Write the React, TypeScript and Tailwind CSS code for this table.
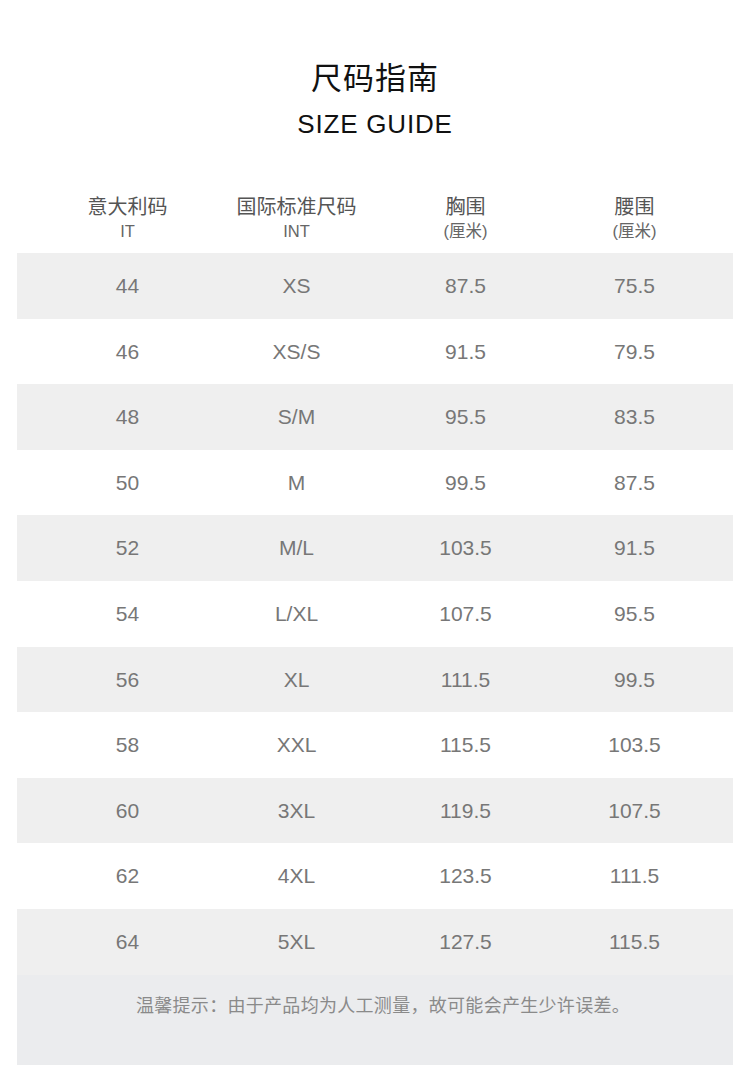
import React from "react";

const rows: [string, string, string, string][] = [
  ["44", "XS", "87.5", "75.5"],
  ["46", "XS/S", "91.5", "79.5"],
  ["48", "S/M", "95.5", "83.5"],
  ["50", "M", "99.5", "87.5"],
  ["52", "M/L", "103.5", "91.5"],
  ["54", "L/XL", "107.5", "95.5"],
  ["56", "XL", "111.5", "99.5"],
  ["58", "XXL", "115.5", "103.5"],
  ["60", "3XL", "119.5", "107.5"],
  ["62", "4XL", "123.5", "111.5"],
  ["64", "5XL", "127.5", "115.5"],
];

const headers: [string, string][] = [
  ["意大利码", "IT"],
  ["国际标准尺码", "INT"],
  ["胸围", "(厘米)"],
  ["腰围", "(厘米)"],
];

const font = {
  fontFamily: '"Liberation Sans", "Noto Sans CJK SC", sans-serif',
};

export default function App() {
  return (
    <div className="w-[750px] h-[1090px] bg-white" style={font}>
      <div className="flex flex-col items-center pt-[58px]">
        <div className="text-[31px] leading-[42px] text-[#111] tracking-[1px]">尺码指南</div>
        <div className="mt-[7px] text-[26px] leading-[34px] text-[#111] tracking-[0.8px]">SIZE GUIDE</div>
      </div>
      <div className="mx-[17px] mt-[50px]">
        <div className="grid grid-cols-[169px_169px_169px_169px] pl-[26px] h-[62px] items-start pt-[4px]">
          {headers.map(([a, b], i) => (
            <div key={i} className="flex flex-col items-center">
              <div className="text-[20px] leading-[24px] text-[#555]">{a}</div>
              <div className="text-[16.5px] leading-[24px] text-[#666]">{b}</div>
            </div>
          ))}
        </div>
        {rows.map((r, i) => (
          <div
            key={i}
            className={`grid grid-cols-[169px_169px_169px_169px] pl-[26px] h-[65.6px] items-center ${
              i % 2 === 0 ? "bg-[#efefef]" : "bg-white"
            }`}
          >
            {r.map((c, j) => (
              <div key={j} className="text-center text-[21px] text-[#777]">
                {c}
              </div>
            ))}
          </div>
        ))}
        <div className="h-[90px] bg-[#ebecee] flex justify-center pt-[18px] pl-[16px]">
          <div className="text-[18px] leading-[26px] text-[#8a8a8a] tracking-[0.3px]">
            温馨提示：由于产品均为人工测量，故可能会产生少许误差。
          </div>
        </div>
      </div>
    </div>
  );
}
